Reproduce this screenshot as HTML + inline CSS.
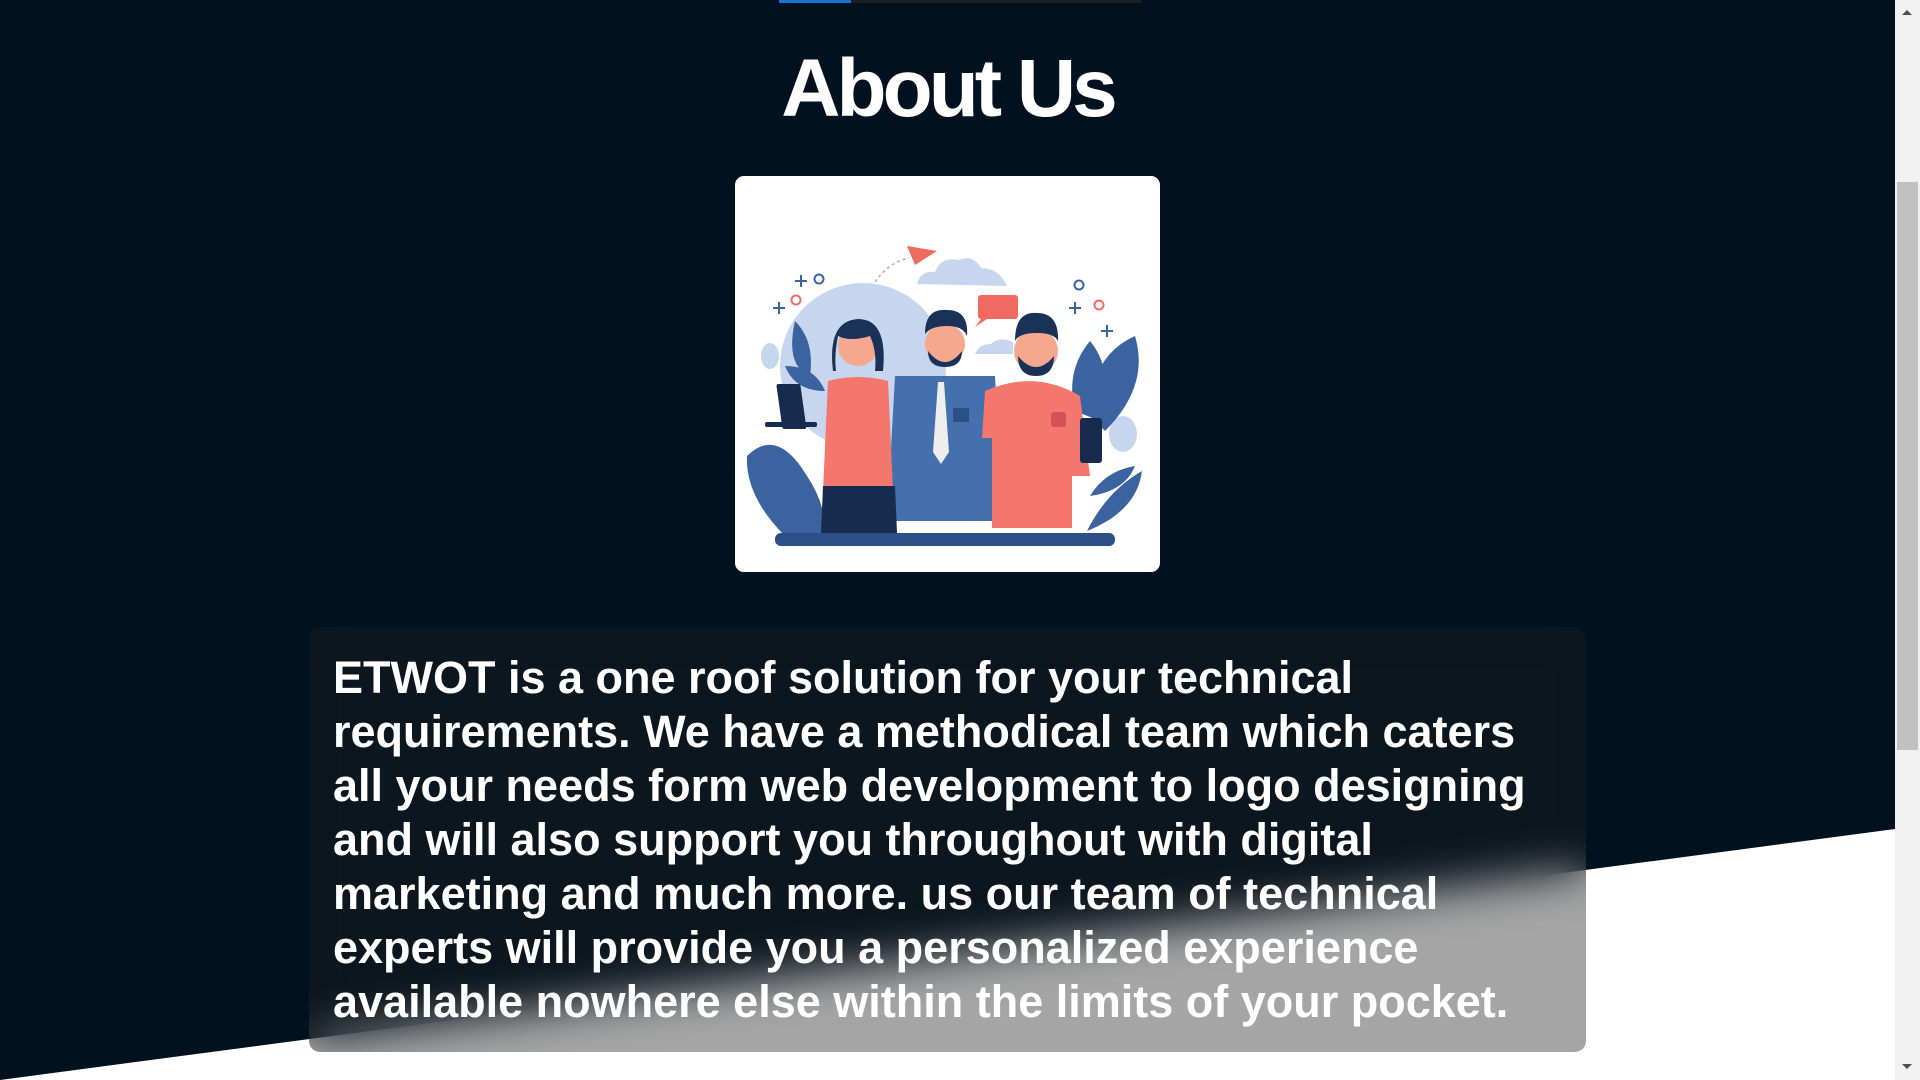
<!DOCTYPE html>
<html><head><meta charset="utf-8"><style>
html,body{margin:0;padding:0;width:1920px;height:1080px;overflow:hidden;background:#01111f;font-family:"Liberation Sans",Arial,sans-serif}
.page{position:absolute;left:0;top:0;width:1895px;height:1080px;background:#01111f;overflow:hidden}
.white{position:absolute;left:0;top:0;width:1895px;height:1080px}
.bar{position:absolute;top:0;left:779px;width:362px;height:3px;background:#1c1f24}
.bar i{position:absolute;left:0;top:0;width:72px;height:3px;background:#1a73d0}
h1{position:absolute;top:48px;left:0;width:1895px;margin:0;text-align:center;color:#fff;font-size:82px;line-height:82px;font-weight:700;letter-spacing:-4px}
.img{position:absolute;left:735px;top:176px;width:425px;height:396px;background:#fff;border-radius:9px;overflow:hidden}
.box{position:absolute;left:309px;top:627px;width:1277px;height:425px;border-radius:11px;background:rgba(30,30,30,0.4);backdrop-filter:blur(22px);-webkit-backdrop-filter:blur(22px)}
.txt{position:absolute;left:333px;top:651px;color:#fff;font-weight:700;font-size:45px;line-height:54px;white-space:nowrap}
.sb{position:absolute;left:1895px;top:0;width:25px;height:1080px;background:#f1f1f1}
.sb .th{position:absolute;left:2px;top:182px;width:21px;height:568px;background:#c1c1c1}
.sb .up{position:absolute;left:7px;top:10px;width:0;height:0;border-left:5px solid transparent;border-right:5px solid transparent;border-bottom:5px solid #505050}
.sb .dn{position:absolute;left:7px;top:1064px;width:0;height:0;border-left:5px solid transparent;border-right:5px solid transparent;border-top:5px solid #505050}
</style></head><body>
<div class="page">
<svg class="white" viewBox="0 0 1895 1080"><polygon points="0,1080 1895,829 1895,1080" fill="#fff"/></svg>
<div class="bar"><i></i></div>
<h1>About Us</h1>
<div class="img">
<svg width="425" height="396" viewBox="0 0 425 396">
<circle cx="128" cy="190" r="83" fill="#c5d6ee"/>
<path d="M182 108 q4-14 18-12 q6-16 24-12 q14 -6 22 8 q18 0 26 18 z" fill="#c5d6ee"/>
<path d="M240 178 q4-10 16-10 q8-8 22-2 l0 12 z" fill="#c5d6ee"/>
<ellipse cx="35" cy="180" rx="9" ry="13" fill="#c5d6ee"/>
<ellipse cx="388" cy="258" rx="14" ry="18" fill="#c5d6ee"/>
<path d="M172 70 l30 5 l-22 14 z" fill="#f06a62"/>
<path d="M140 106 q14 -20 34 -24" stroke="#9bb6dc" stroke-width="1.5" stroke-dasharray="3 3" fill="none"/>
<rect x="243" y="119" width="40" height="24" rx="3" fill="#f06a62"/>
<path d="M246 143 l-6 8 l12 -8z" fill="#f06a62"/>
<path d="M60 105 h12 M66 99 v12 M38 132 h12 M44 126 v12 M334 132 h12 M340 126 v12 M366 155 h12 M372 149 v12" stroke="#3a63a0" stroke-width="2"/>
<circle cx="84" cy="103" r="4.5" stroke="#3a63a0" stroke-width="2" fill="none"/>
<circle cx="61" cy="124" r="4.5" stroke="#f06a62" stroke-width="2" fill="none"/>
<circle cx="344" cy="109" r="4.5" stroke="#3a63a0" stroke-width="2" fill="none"/>
<circle cx="364" cy="129" r="4.5" stroke="#f06a62" stroke-width="2" fill="none"/>
<path d="M12 280 q30 -30 60 20 q20 30 18 60 l-40 0 q-40 -40 -38 -80z" fill="#3a63a0"/>
<path d="M60 145 q20 20 15 55 q-25 -10 -15 -55z M50 190 q30 0 40 25 q-30 0 -40 -25z" fill="#3a63a0"/>
<path d="M340 235 q-10 -40 15 -70 q25 30 10 80z M355 240 q0 -60 45 -80 q15 50 -30 95z" fill="#3a63a0"/>
<path d="M352 355 q20 -40 55 -60 q-5 40 -55 60z M355 320 q15 -25 45 -30 q-10 25 -45 30z" fill="#3a63a0"/>
<path d="M160 200 l100 0 l8 145 l-116 0z" fill="#4471ad"/>
<path d="M203 206 l6 0 l5 70 l-8 12 l-8 -12z" fill="#eee"/>
<rect x="218" y="232" width="16" height="14" fill="#2b4f86"/>
<circle cx="210" cy="168" r="20" fill="#f6a88e"/>
<path d="M190 158 q0 -26 22 -24 q22 0 20 26 q-4 -10 -20 -10 q-16 0 -22 8z" fill="#1a3158"/>
<path d="M193 175 q17 22 34 0 q0 16 -17 16 q-17 0 -17 -16z" fill="#1a3158"/>
<path d="M93 205 q30 -8 60 0 l5 110 l-70 0z" fill="#f3776c"/>
<path d="M88 310 l72 0 l2 47 l-76 0z" fill="#162b4d"/>
<circle cx="123" cy="170" r="20" fill="#f6a88e"/>
<path d="M98 195 q-6 -50 25 -52 q30 0 25 52 l-8 0 q2 -20 -5 -35 q-20 6 -32 0 q-4 20 -2 35z" fill="#1a3158"/>
<rect x="12" y="208" width="24" height="45" rx="2" fill="#162b4d" transform="skewX(8)"/>
<rect x="30" y="246" width="52" height="5" rx="2" fill="#162b4d"/>
<path d="M250 215 q50 -22 95 5 l10 80 l-18 0 l0 52 l-80 0 l0 -90 l-10 0z" fill="#f3776c"/>
<rect x="316" y="236" width="15" height="15" rx="3" fill="#d94f57"/>
<circle cx="301" cy="175" r="22" fill="#f6a88e"/>
<path d="M280 165 q0 -30 22 -28 q22 0 21 28 q-4 -8 -21 -8 q-18 0 -22 8z" fill="#1a3158"/>
<path d="M283 180 q18 22 36 0 q0 20 -18 20 q-18 0 -18 -20z" fill="#1a3158"/>
<rect x="345" y="242" width="22" height="45" rx="3" fill="#162b4d"/>
<rect x="40" y="357" width="340" height="13" rx="6" fill="#2b4f86"/>
</svg>
</div>
<div class="box"></div>
<div class="txt">ETWOT is a one roof solution for your technical<br>requirements. We have a methodical team which caters<br>all your needs form web development to logo designing<br>and will also support you throughout with digital<br>marketing and much more. us our team of technical<br>experts will provide you a personalized experience<br>available nowhere else within the limits of your pocket.</div>
</div>
<div class="sb"><div class="up"></div><div class="th"></div><div class="dn"></div></div>
</body></html>
